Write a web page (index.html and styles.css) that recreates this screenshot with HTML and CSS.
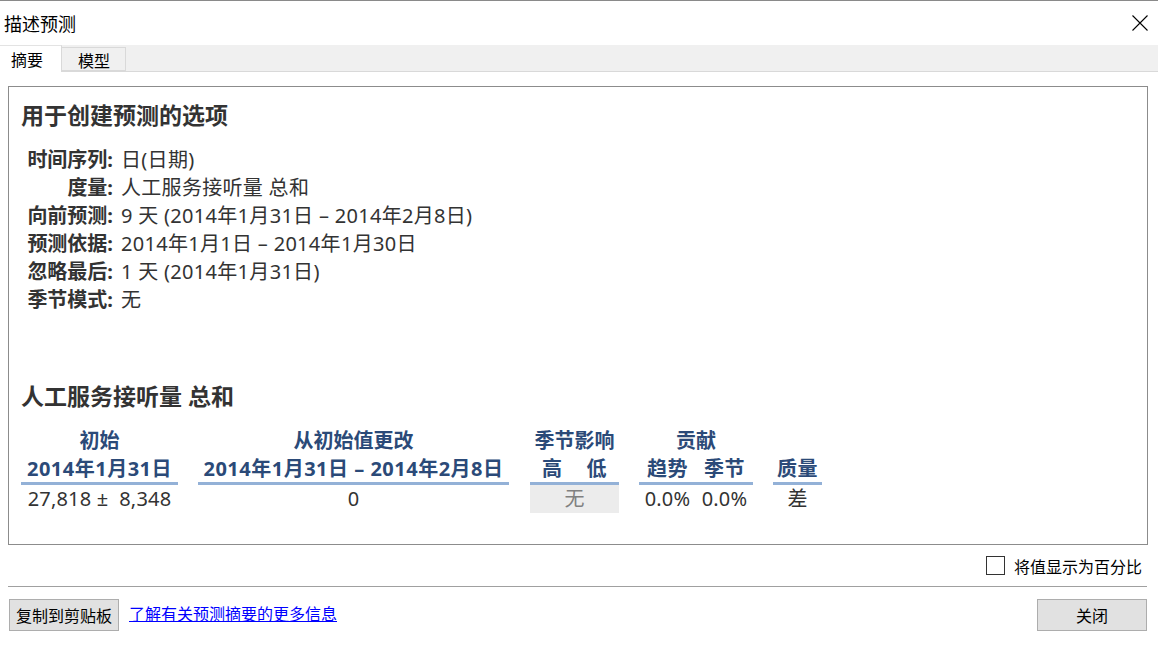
FILE: index.html
```html
<!DOCTYPE html>
<html lang="zh-CN">
<head>
<meta charset="utf-8">
<title>描述预测</title>
<link rel="stylesheet" href="styles.css">
</head>
<body>
<div class="window">
  <div class="titlebar">
    <span class="title">描述预测</span>
    <svg class="close" width="16" height="16" viewBox="0 0 16 16"><path d="M0.5 0.5 L15.5 15.5 M15.5 0.5 L0.5 15.5" stroke="#000" stroke-width="1.1" fill="none"/></svg>
  </div>
  <div class="tabs">
    <div class="tab active">摘要</div>
    <div class="tab">模型</div>
  </div>
  <div class="panel">
    <h2 class="heading">用于创建预测的选项</h2>
    <div class="opts">
      <div class="lbl">时间序列:</div><div class="val">日(日期)</div>
      <div class="lbl">度量:</div><div class="val">人工服务接听量 总和</div>
      <div class="lbl">向前预测:</div><div class="val">9 天 (2014年1月31日 – 2014年2月8日)</div>
      <div class="lbl">预测依据:</div><div class="val">2014年1月1日 – 2014年1月30日</div>
      <div class="lbl">忽略最后:</div><div class="val">1 天 (2014年1月31日)</div>
      <div class="lbl">季节模式:</div><div class="val">无</div>
    </div>
    <h2 class="heading heading2">人工服务接听量 总和</h2>
    <div class="stats">
      <div class="grp g1">
        <div class="h1">初始</div>
        <div class="h2"><span class="sub">2014年1月31日</span></div>
        <div class="d"><span class="sub">27,818 ±&nbsp; 8,348</span></div>
      </div>
      <div class="grp g2">
        <div class="h1">从初始值更改</div>
        <div class="h2"><span class="sub">2014年1月31日 – 2014年2月8日</span></div>
        <div class="d"><span class="sub">0</span></div>
      </div>
      <div class="grp g3">
        <div class="h1">季节影响</div>
        <div class="h2"><span class="sub">高</span><span class="sub">低</span></div>
        <div class="d none"><span class="sub">无</span></div>
      </div>
      <div class="grp g4">
        <div class="h1">贡献</div>
        <div class="h2"><span class="sub">趋势</span><span class="sub">季节</span></div>
        <div class="d"><span class="sub">0.0%</span><span class="sub">0.0%</span></div>
      </div>
      <div class="grp g5">
        <div class="h1">&nbsp;</div>
        <div class="h2"><span class="sub">质量</span></div>
        <div class="d"><span class="sub">差</span></div>
      </div>
    </div>
  </div>
  <div class="pctrow">
    <label class="chk"><span class="box"></span><span>将值显示为百分比</span></label>
  </div>
  <div class="sep"></div>
  <div class="footer">
    <div class="left">
      <button class="btn">复制到剪贴板</button>
      <a class="link" href="#">了解有关预测摘要的更多信息</a>
    </div>
    <button class="btn">关闭</button>
  </div>
</div>
</body>
</html>
```
FILE: styles.css
```css
html, body {
  margin: 0;
  padding: 0;
  background: #fff;
}
body {
  font-family: "Noto Sans", "Noto Sans CJK SC", sans-serif;
  color: #000;
  width: 1158px;
  height: 647px;
  overflow: hidden;
}
.window {
  border-top: 1px solid #8a8a8a;
  height: 646px;
}
.titlebar {
  height: 44px;
  display: flex;
  align-items: center;
  justify-content: space-between;
  padding: 0 10px 0 4px;
}
.title {
  font-family: "Noto Sans CJK SC", sans-serif;
  font-size: 18px;
  line-height: 20px;
  color: #000;
}
.close {
  display: block;
  margin-top: -1px;
}
.tabs {
  height: 26px;
  background: #f0f0f0;
  border-bottom: 1px solid #d9d9d9;
  display: flex;
  align-items: flex-start;
}
.tab {
  font-family: "Noto Sans CJK SC", sans-serif;
  font-size: 16px;
  box-sizing: border-box;
  width: 64px;
  height: 24px;
  margin-top: 2px;
  border: 1px solid #d9d9d9;
  border-left: none;
  background: #f0f0f0;
  text-align: center;
  line-height: 24px;
  padding-left: 1px;
}
.tab.active {
  width: 62px;
  height: 27px;
  margin-top: 0;
  background: #fff;
  border-bottom: none;
  line-height: 26px;
  border-top-color: #e3e3e3;
  padding: 0 7px 0 0;
}
.panel {
  box-sizing: border-box;
  margin: 14px 0 0 8px;
  width: 1140px;
  height: 459px;
  border: 1px solid #8c8c8c;
  padding: 14px 12px 0 12px;
  color: #333;
}
.heading {
  margin: 0;
  font-size: 23px;
  line-height: 28px;
  height: 28px;
  font-weight: 700;
  color: #333;
  white-space: nowrap;
}
.opts {
  margin-top: 17px;
  display: grid;
  grid-template-columns: 92px auto;
  column-gap: 8px;
  font-size: 20px;
  line-height: 28px;
}
.lbl {
  text-align: right;
  font-weight: 700;
  white-space: nowrap;
}
.val {
  white-space: nowrap;
  letter-spacing: 0.3px;
}
.heading2 {
  margin-top: 68px;
}
.stats {
  margin-top: 17px;
  display: flex;
  font-size: 20px;
  color: #333;
}
.grp {
  flex: none;
}
.g1 { width: 157px; }
.g2 { width: 311px; margin-left: 20px; }
.g3 { width: 89px; margin-left: 21px; }
.g4 { width: 114px; margin-left: 20px; }
.g5 { width: 49px; margin-left: 20px; }
.h1 {
  height: 28px;
  line-height: 28px;
  text-align: center;
  font-weight: 700;
  color: #2b4a78;
  white-space: nowrap;
}
.h2 {
  height: 27px;
  line-height: 28px;
  display: flex;
  font-weight: 700;
  color: #2b4a78;
  border-bottom: 3px solid #93b1d7;
  white-space: nowrap;
  letter-spacing: 0.5px;
}
.sub {
  flex: 1 1 0;
  text-align: center;
  white-space: nowrap;
}
.d {
  height: 28px;
  line-height: 28px;
  display: flex;
  white-space: nowrap;
  letter-spacing: 0.2px;
}
.d.none {
  background: #ececec;
  color: #808080;
}
.pctrow {
  display: flex;
  justify-content: flex-end;
  padding: 10px 16px 0 0;
  height: 21px;
}
.chk {
  display: flex;
  align-items: center;
  font-family: "Noto Sans CJK SC", sans-serif;
  font-size: 16px;
  color: #000;
}
.box {
  box-sizing: border-box;
  width: 19px;
  height: 19px;
  border: 1px solid #333;
  margin-right: 9px;
  background: #fff;
}
.sep {
  margin: 10px 0 0 8px;
  width: 1139px;
  height: 1px;
  background: #a0a0a0;
}
.footer {
  margin-top: 12px;
  display: flex;
  justify-content: space-between;
  align-items: center;
  padding: 0 11px 0 9px;
}
.left {
  display: flex;
  align-items: center;
}
.btn {
  box-sizing: border-box;
  width: 110px;
  height: 32px;
  background: #e1e1e1;
  border: 1px solid #adadad;
  border-radius: 0;
  font-family: "Noto Sans CJK SC", sans-serif;
  font-size: 16px;
  color: #000;
  padding: 0;
  margin: 0;
}
.link {
  margin-left: 10px;
  font-family: "Noto Sans CJK SC", sans-serif;
  font-size: 16px;
  color: #0000ff;
  text-decoration: underline;
  margin-top: -4px;
}
```
